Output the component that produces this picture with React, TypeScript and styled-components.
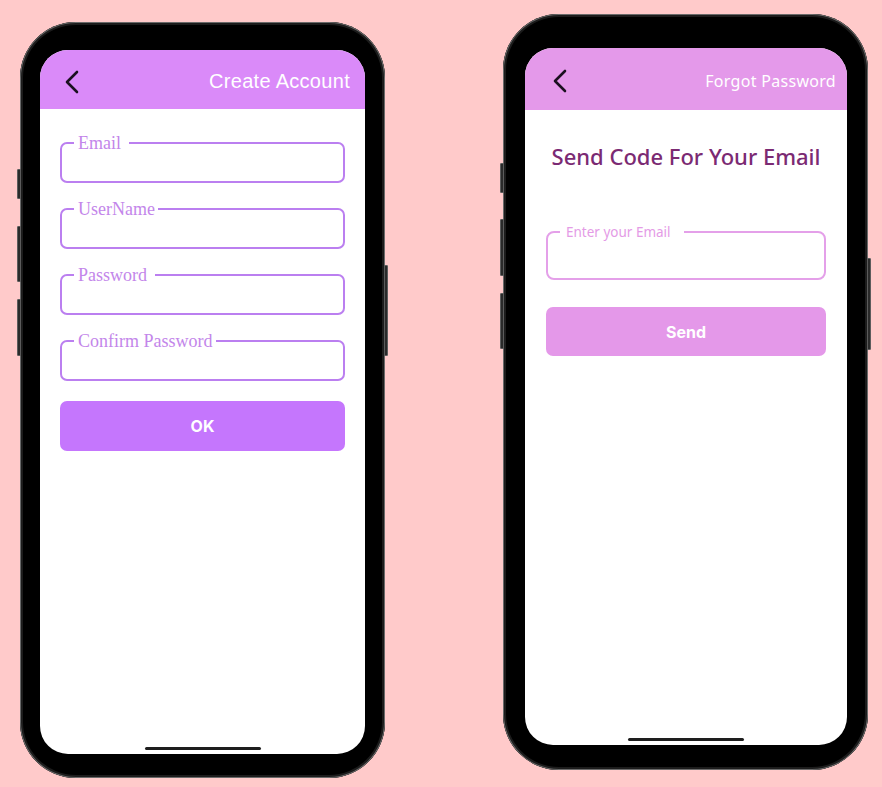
import styled, { createGlobalStyle } from "styled-components";

const GlobalStyle = createGlobalStyle`
  html, body {
    margin: 0;
    padding: 0;
    background: #ffcaca;
  }
  * {
    box-sizing: border-box;
  }
`;

function BackIcon() {
  return (
    <svg width="16" height="24" viewBox="0 0 16 24" fill="none">
      <polyline
        points="13,2 3,12 13,22"
        stroke="#1b1020"
        strokeWidth="2.6"
        strokeLinecap="round"
        strokeLinejoin="round"
      />
    </svg>
  );
}

function CreateAccount() {
  const fields = ["Email ", "UserName", "Password ", "Confirm Password"];
  return (
    <Phone $top={22} $pad="28px 20px 24px 20px">
      <SideButton $side="left" $top={147} $h={30} />
      <SideButton $side="left" $top={204} $h={56} />
      <SideButton $side="left" $top={277} $h={57} />
      <SideButton $side="right" $top={243} $h={91} />
      <Screen>
        <Header $bg="#da8af9" $h={59} $pl={24} $pr={15}>
          <BackIcon />
          <HeaderTitle $font={`"Liberation Sans", Arial, sans-serif`} $size={20}>
            Create Account
          </HeaderTitle>
        </Header>
        <Form $pt={26} $px={20} $gap={18}>
          {fields.map((f) => (
            <Field key={f} $border="#bb7ff0" $radius={7}>
              <Legend
                $color="#c386ea"
                $font={`"Liberation Serif", "Times New Roman", serif`}
                $size={18}
                $pad="0 3px 0 4px"
              >
                {f}
              </Legend>
              <FieldInput $h={30} />
            </Field>
          ))}
          <Button $bg="#c576fd" $h={50} $mt={2}>
            OK
          </Button>
        </Form>
        <HomeBar $bottom={4} />
      </Screen>
    </Phone>
  );
}

function ForgotPassword() {
  return (
    <Phone $top={14} $pad="34px 21px 25px 22px">
      <SideButton $side="left" $top={149} $h={30} />
      <SideButton $side="left" $top={205} $h={57} />
      <SideButton $side="left" $top={279} $h={56} />
      <SideButton $side="right" $top={244} $h={92} />
      <Screen>
        <Header $bg="#e499ea" $h={62} $pl={27} $pr={11}>
          <BackIcon />
          <HeaderTitle $font={`"Noto Sans", "Open Sans", sans-serif`} $size={16}>
            Forgot Password
          </HeaderTitle>
        </Header>
        <Form $pt={31} $px={21} $gap={0}>
          <Title>Send Code For Your Email</Title>
          <Field $border="#e4a0e9" $radius={8} $mt={53}>
            <Legend
              $color="#e49be6"
              $font={`"Noto Sans", "Open Sans", sans-serif`}
              $size={13.5}
              $pad="0 13px 0 6px"
            >
              Enter your Email
            </Legend>
            <FieldInput $h={38} />
          </Field>
          <Button $bg="#e498e9" $h={49} $mt={27}>
            Send
          </Button>
        </Form>
        <HomeBar $bottom={4} />
      </Screen>
    </Phone>
  );
}

export default function App() {
  return (
    <>
      <GlobalStyle />
      <Stage>
        <CreateAccount />
        <ForgotPassword />
      </Stage>
    </>
  );
}

const Stage = styled.div`
  width: 882px;
  height: 787px;
  overflow: hidden;
  display: flex;
  align-items: flex-start;
  padding-left: 20px;
  gap: 118px;
`;

const Phone = styled.div<{ $top: number; $pad: string }>`
  position: relative;
  width: 365px;
  height: 756px;
  margin-top: ${(p) => p.$top}px;
  padding: ${(p) => p.$pad};
  background: #000;
  border-radius: 56px;
  box-shadow: inset 0 0 0 1px #6a6a6a, inset 0 0 0 3px #1c1c1c;
`;

const SideButton = styled.span<{ $side: "left" | "right"; $top: number; $h: number }>`
  position: absolute;
  ${(p) => (p.$side === "left" ? "left: -3px;" : "right: -3px;")}
  top: ${(p) => p.$top}px;
  width: 4px;
  height: ${(p) => p.$h}px;
  background: #2a2a2a;
  border: 1px solid #5c5c5c;
  border-radius: 1px;
`;

const Screen = styled.div`
  height: 100%;
  background: #fff;
  border-radius: 28px;
  overflow: hidden;
  display: flex;
  flex-direction: column;
`;

const Header = styled.header<{ $bg: string; $h: number; $pl: number; $pr: number }>`
  flex: none;
  height: ${(p) => p.$h}px;
  background: ${(p) => p.$bg};
  display: flex;
  align-items: center;
  justify-content: space-between;
  padding: 4px ${(p) => p.$pr}px 0 ${(p) => p.$pl}px;
`;

const HeaderTitle = styled.h1<{ $font: string; $size: number }>`
  margin: 0;
  font-family: ${(p) => p.$font};
  font-size: ${(p) => p.$size}px;
  font-weight: 400;
  color: #fff;
  letter-spacing: 0.3px;
`;

const Form = styled.div<{ $pt: number; $px: number; $gap: number }>`
  display: flex;
  flex-direction: column;
  gap: ${(p) => p.$gap}px;
  padding: ${(p) => p.$pt}px ${(p) => p.$px}px 0;
`;

const Title = styled.h2`
  margin: 0;
  text-align: center;
  font-family: "Noto Sans", "Open Sans", sans-serif;
  font-size: 22px;
  line-height: 30px;
  font-weight: 500;
  color: #7b2a73;
`;

const Field = styled.fieldset<{ $border: string; $radius: number; $mt?: number }>`
  margin: ${(p) => p.$mt ?? 0}px 0 0;
  padding: 0 12px;
  border: 2px solid ${(p) => p.$border};
  border-radius: ${(p) => p.$radius}px;
  min-width: 0;
`;

const Legend = styled.legend<{ $color: string; $font: string; $size: number; $pad: string }>`
  padding: ${(p) => p.$pad};
  font-family: ${(p) => p.$font};
  font-size: ${(p) => p.$size}px;
  line-height: 16px;
  color: ${(p) => p.$color};
  white-space: pre;
`;

const FieldInput = styled.input<{ $h: number }>`
  display: block;
  width: 100%;
  height: ${(p) => p.$h}px;
  border: none;
  outline: none;
  background: transparent;
  padding: 0;
  font-size: 15px;
`;

const Button = styled.button<{ $bg: string; $h: number; $mt: number }>`
  height: ${(p) => p.$h}px;
  margin-top: ${(p) => p.$mt}px;
  border: none;
  border-radius: 7px;
  background: ${(p) => p.$bg};
  color: #fff;
  font-family: Inter, Roboto, sans-serif;
  font-weight: 700;
  font-size: 16px;
  cursor: pointer;
`;

const HomeBar = styled.div<{ $bottom: number }>`
  flex: none;
  margin: auto auto ${(p) => p.$bottom}px;
  width: 116px;
  height: 3px;
  border-radius: 2px;
  background: #1e1e1e;
`;
